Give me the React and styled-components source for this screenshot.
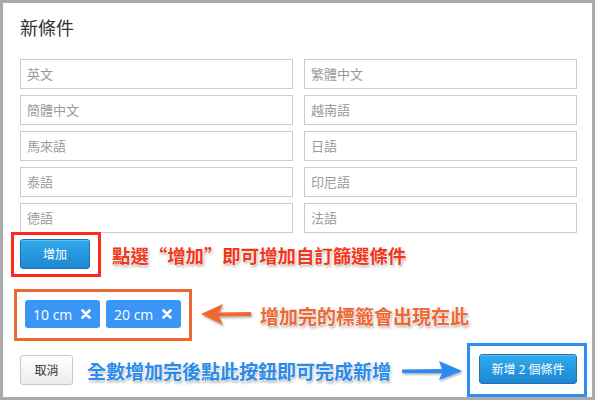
import styled, { createGlobalStyle } from "styled-components";

const GlobalStyle = createGlobalStyle`
  html, body {
    margin: 0;
    padding: 0;
    background: #ababab;
  }
  body {
    font-family: "Open Sans", "Noto Sans CJK TC", sans-serif;
  }
`;

const languages = [
  "英文", "繁體中文",
  "簡體中文", "越南語",
  "馬來語", "日語",
  "泰語", "印尼語",
  "德語", "法語",
];

const tags = ["10 cm", "20 cm"];

const CloseIcon = () => (
  <svg width="10" height="10" viewBox="0 0 10 10">
    <path d="M1.5 1.5 L8.5 8.5 M8.5 1.5 L1.5 8.5" stroke="#fff" strokeWidth="2.6" strokeLinecap="round" />
  </svg>
);

const LeftArrow = ({ color }) => (
  <svg width="56" height="28" viewBox="0 0 56 28">
    <defs>
      <filter id="arrowShadowL" x="-20%" y="-40%" width="140%" height="180%">
        <feDropShadow dx="1" dy="1.5" stdDeviation="1.2" floodColor="#000" floodOpacity="0.35" />
      </filter>
    </defs>
    <path
      d="M3 13 L25 3 L21 11.5 L53 11 L53 15 L21 15.5 L25 24 Z"
      fill={color}
      filter="url(#arrowShadowL)"
    />
  </svg>
);

const RightArrow = ({ color }) => (
  <svg width="66" height="26" viewBox="0 0 66 26">
    <defs>
      <filter id="arrowShadowR" x="-20%" y="-40%" width="140%" height="180%">
        <feDropShadow dx="1" dy="1.5" stdDeviation="1.2" floodColor="#000" floodOpacity="0.35" />
      </filter>
    </defs>
    <path
      d="M63 14 L40 4 L43 12 L3 12.5 L3 16 L43 16 L40 23 Z"
      fill={color}
      filter="url(#arrowShadowR)"
    />
  </svg>
);

export default function App() {
  return (
    <>
      <GlobalStyle />
      <Panel>
        <Title>新條件</Title>
        <InputGrid>
          {languages.map((name) => (
            <TextInput key={name} placeholder={name} />
          ))}
        </InputGrid>

        <AddRow>
          <Frame $color="#ff2a1a" $pad="4px 8px 5px 6px" $offset="-9px">
            <PrimaryButton $width="70px">增加</PrimaryButton>
          </Frame>
          <Note $color="#f2361a" $size="18.4px">點選“增加”即可增加自訂篩選條件</Note>
        </AddRow>

        <TagRow>
          <Frame $color="#ee6833" $pad="8px 8px 10px 8px" $offset="-6px">
            <TagList>
              {tags.map((t) => (
                <Tag key={t}>
                  {t}
                  <CloseIcon />
                </Tag>
              ))}
            </TagList>
          </Frame>
          <LeftArrow color="#ee6833" />
          <Note $color="#ee6833">增加完的標籤會出現在此</Note>
        </TagRow>

        <Footer>
          <CancelButton>取消</CancelButton>
          <Note $color="#2a8bea">全數增加完後點此按鈕即可完成新增</Note>
          <RightArrow color="#2a8bf0" />
          <Frame $color="#2f8ef5" $pad="8px 7px 10px 9px" $offset="0" $right="-10px">
            <PrimaryButton $width="98px">新增 2 個條件</PrimaryButton>
          </Frame>
        </Footer>
      </Panel>
    </>
  );
}

const Panel = styled.div`
  box-sizing: border-box;
  width: 589px;
  height: 394px;
  margin: 3px;
  background: #fff;
  padding: 13px 15px 0 17px;
  display: flex;
  flex-direction: column;
`;

const Title = styled.h1`
  margin: 0 0 19px 0;
  font-size: 18px;
  line-height: 24px;
  font-weight: 400;
  color: #333;
`;

const InputGrid = styled.div`
  display: grid;
  grid-template-columns: 273px 273px;
  column-gap: 11px;
  row-gap: 6px;
`;

const TextInput = styled.input`
  box-sizing: border-box;
  height: 30px;
  border: 1px solid #ccc;
  padding: 0 6px;
  font-family: "Open Sans", "Noto Sans CJK TC", sans-serif;
  font-size: 13px;
  outline: none;
  &::placeholder {
    color: #999;
  }
`;

const Frame = styled.div`
  display: flex;
  padding: ${({ $pad }) => $pad};
  border: 3px solid ${({ $color }) => $color};
  margin-left: ${({ $offset }) => $offset};
  margin-right: ${({ $right }) => $right || "0"};
`;

const AddRow = styled.div`
  display: flex;
  align-items: center;
  gap: 11px;
  margin-top: -1px;
`;

const TagRow = styled.div`
  display: flex;
  align-items: center;
  gap: 6px;
  margin-top: 12px;
`;

const Footer = styled.div`
  display: flex;
  align-items: center;
  margin-top: 2px;

  & > svg {
    margin-left: auto;
    margin-right: 2px;
  }
`;

const Note = styled.span`
  font-family: "Noto Sans CJK TC", sans-serif;
  font-size: ${({ $size }) => $size || "19px"};
  font-weight: 700;
  color: ${({ $color }) => $color};
  text-shadow:
    0 0 2px #fff,
    0 0 2px #fff,
    1px 2px 3px rgba(0, 0, 0, 0.35);
  white-space: nowrap;
`;

const PrimaryButton = styled.button`
  box-sizing: border-box;
  width: ${({ $width }) => $width};
  height: 30px;
  border: 1px solid #1f70b3;
  border-radius: 3px;
  background: linear-gradient(#31abee, #1e86d2);
  color: #fff;
  font-family: "Open Sans", "Noto Sans CJK TC", sans-serif;
  font-size: 12px;
  padding: 0;
  box-shadow: inset 0 1px 0 rgba(255, 255, 255, 0.25);
`;

const CancelButton = styled.button`
  box-sizing: border-box;
  width: 53px;
  height: 30px;
  border: 1px solid #c8c8c8;
  border-radius: 3px;
  background: linear-gradient(#fff, #ececec);
  color: #333;
  font-family: "Open Sans", "Noto Sans CJK TC", sans-serif;
  font-size: 12px;
  padding: 0;
  margin-right: 14px;
`;

const TagList = styled.div`
  display: flex;
  gap: 6px;
`;

const Tag = styled.span`
  display: inline-flex;
  align-items: center;
  justify-content: space-between;
  box-sizing: border-box;
  width: 75px;
  height: 28px;
  padding: 0 9px 0 8px;
  background: #3a96f6;
  border-radius: 3px;
  color: #fff;
  font-size: 14px;
`;
